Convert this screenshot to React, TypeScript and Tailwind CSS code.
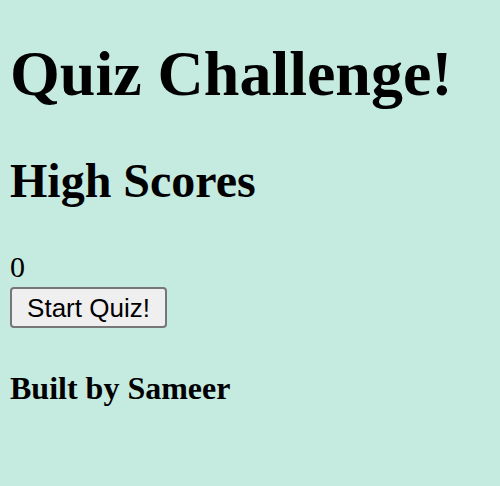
import React from 'react'

export default function App() {
  const startQuiz = () => {
    console.log('start quiz')
  }
  return (
    <main className="min-h-screen bg-[#c5ebe0] px-[10px] pt-[37px] text-black font-['Liberation_Serif',serif]">
      <h1 className="text-[64px] font-bold leading-[1.15]">Quiz Challenge!</h1>
      <h2 className="mt-[42px] text-[48px] font-bold leading-[1.15]">High Scores</h2>
      <p className="mt-[42px] text-[30px] leading-[1.15]">0</p>
      <button
        type="button"
        onClick={startQuiz}
        className="mt-[3px] block w-[157px] h-[41px] rounded-[4px] border-2 border-[#767676] bg-[#efefef] text-[26px] font-['Liberation_Sans',Arial,sans-serif] leading-none"
      >
        Start Quiz!
      </button>
      <h3 className="mt-[42px] text-[32px] font-bold leading-[1.15]">Built by Sameer</h3>
    </main>
  )
}
